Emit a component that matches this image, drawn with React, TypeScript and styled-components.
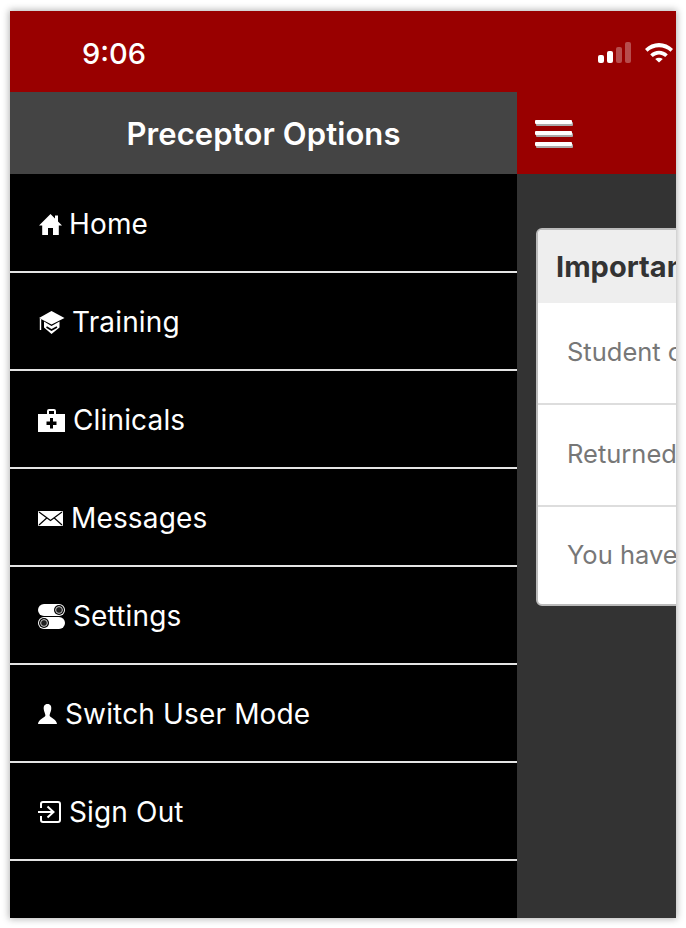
import type { ReactNode } from "react";
import styled, { createGlobalStyle } from "styled-components";

const GlobalStyle = createGlobalStyle`
	html, body {
		margin: 0;
		padding: 0;
		background: #fff;
		font-family: Inter, "Liberation Sans", Arial, sans-serif;
	}
`

const Page = styled.div`
	width: 686px;
	height: 928px;
	padding: 11px 10px 10px;
	box-sizing: border-box;
`

const Phone = styled.div`
	width: 666px;
	height: 907px;
	display: flex;
	flex-direction: column;
	overflow: hidden;
	box-shadow: 0 0 7px 1px rgba(0, 0, 0, 0.3);
`

const StatusBar = styled.div`
	height: 81px;
	flex: none;
	background: #990000;
	color: #fff;
	display: flex;
	align-items: flex-start;
	justify-content: space-between;
	padding: 30px 2px 0 72px;
	box-sizing: border-box;
`

const Clock = styled.span`
	font-size: 29px;
	font-weight: 500;
	line-height: 26px;
`

const StatusIcons = styled.div`
	display: flex;
	align-items: flex-end;
	gap: 13px;
	height: 22px;
`

const SignalBars = styled.div`
	display: flex;
	align-items: flex-end;
	gap: 3px;
`

const SignalBar = styled.i<{ $height: number; $on?: boolean }>`
	display: block;
	width: 6px;
	height: ${p => p.$height}px;
	border-radius: 2px;
	background: ${p => (p.$on ? "#fff" : "rgba(255, 255, 255, 0.3)")};
`

const Body = styled.div`
	flex: 1;
	display: flex;
	min-height: 0;
`

const Drawer = styled.nav`
	width: 507px;
	flex: none;
	background: #000;
	display: flex;
	flex-direction: column;
`

const DrawerTitle = styled.h1`
	margin: 0;
	height: 82px;
	flex: none;
	background: #444;
	color: #fff;
	display: flex;
	align-items: center;
	justify-content: center;
	font-size: 31px;
	font-weight: 600;
	letter-spacing: 0.1px;
`

const Menu = styled.div`
	padding-top: 1px;
	display: flex;
	flex-direction: column;
`

const MenuRow = styled.a`
	height: 98px;
	box-sizing: border-box;
	display: flex;
	align-items: center;
	gap: 7px;
	padding: 2px 0 0 28px;
	border-bottom: 2px solid #e4e4e4;
	color: #fff;
	font-size: 28px;
	font-weight: 400;
	letter-spacing: 0.15px;
`

const MainColumn = styled.div`
	flex: 1;
	min-width: 0;
	display: flex;
	flex-direction: column;
	background: #333;
	overflow: hidden;
`

const Toolbar = styled.div`
	height: 82px;
	flex: none;
	background: #990000;
	display: flex;
	align-items: center;
	padding-left: 18px;
`

const Burger = styled.div`
	display: flex;
	flex-direction: column;
	gap: 7px;
	margin-top: -1px;
`

const BurgerBar = styled.i`
	display: block;
	width: 37px;
	height: 4px;
	border-radius: 1px;
	background: #fff;
	box-shadow: 1px 2px 0 #aaa;
`

const Card = styled.section`
	width: 300px;
	flex: none;
	margin: 54px 0 0 19px;
	background: #fff;
	border: 2px solid #bbb;
	border-radius: 6px;
	box-sizing: border-box;
	overflow: hidden;
`

const CardHeader = styled.h2`
	margin: 0;
	height: 73px;
	background: #eee;
	color: #333;
	display: flex;
	align-items: center;
	padding-left: 18px;
	font-size: 29px;
	font-weight: 700;
	white-space: nowrap;
`

const CardRow = styled.div<{ $last?: boolean }>`
	height: ${p => (p.$last ? 97 : 102)}px;
	box-sizing: border-box;
	display: flex;
	align-items: center;
	padding: 0 0 ${p => (p.$last ? 2 : 4)}px 29px;
	border-bottom: ${p => (p.$last ? "none" : "2px solid #ddd")};
	color: #777;
	font-size: 25.5px;
	white-space: nowrap;
`

function Icon({ width, height, children }: { width: number; height: number; children: ReactNode }) {
	return (
		<svg width={width} height={height} viewBox={`0 0 ${width} ${height}`} fill="#fff" style={{ flex: "none" }}>
			{children}
		</svg>
	)
}

const menu: { label: string; width: number; height: number; icon: ReactNode }[] = [
	{
		label: "Home",
		width: 24,
		height: 21,
		icon: <path d="M12.5 0 L17 4.4 V1.5 H20 V7.4 L24 11.5 H20.8 V21 H15 V14 H10 V21 H4.2 V11.5 H1 Z" />,
	},
	{
		label: "Training",
		width: 27,
		height: 23,
		icon: (
			<>
				<path d="M13.5 0 L26.5 7 L13.5 13.5 L1 7 Z" />
				<path d="M6 10.5 L13.5 15 L21.5 10.5 V16.5 L13.5 23 L6 16.5 Z" />
				<path d="M8.5 16 L13.5 19 L19 16" fill="none" stroke="#000" strokeWidth="1.6" />
				<path d="M2.5 8 V19" stroke="#fff" strokeWidth="1.4" />
			</>
		),
	},
	{
		label: "Clinicals",
		width: 28,
		height: 23,
		icon: (
			<path fillRule="evenodd" d="M9 5 V2 Q9 0 11 0 H16 Q18 0 18 2 V5 H27 V23 H0 V5 Z M11 5 H16 V2 H11 Z M12 9 V12.5 H8.5 V16 H12 V19.5 H15 V16 H18.5 V12.5 H15 V9 Z" />
		),
	},
	{
		label: "Messages",
		width: 26,
		height: 15,
		icon: (
			<>
				<rect width="25" height="15" rx="1" />
				<path d="M1 1 L12.5 9.5 L24 1 M1 14 L9 6.8 M24 14 L16 6.8" fill="none" stroke="#000" strokeWidth="1.2" />
			</>
		),
	},
	{
		label: "Settings",
		width: 28,
		height: 25,
		icon: (
			<>
				<rect width="27" height="12" rx="6" />
				<rect y="13" width="27" height="12" rx="6" />
				<circle cx="21" cy="6" r="5" fill="#000" />
				<circle cx="21" cy="6" r="3.4" fill="#222" stroke="#ccc" strokeWidth="1" />
				<circle cx="6" cy="19" r="5" fill="#000" />
				<circle cx="6" cy="19" r="3.4" fill="#222" stroke="#ccc" strokeWidth="1" />
			</>
		),
	},
	{
		label: "Switch User Mode",
		width: 20,
		height: 20,
		icon: <path d="M9.5 0 C12.6 0 13.6 2.4 13.2 5.4 C12.9 8 11.6 9.6 11.6 11.4 C11.6 13.4 19 15 19 20 H0 C0 15 7.4 13.4 7.4 11.4 C7.4 9.6 6.1 8 5.8 5.4 C5.4 2.4 6.4 0 9.5 0 Z" />,
	},
	{
		label: "Sign Out",
		width: 24,
		height: 22,
		icon: (
			<path
				d="M3 7 V3 Q3 1 5 1 H20 Q22 1 22 3 V19 Q22 21 20 21 H5 Q3 21 3 19 V15 M0 11 H15 M9.5 5.5 L15.5 11 L9.5 16.5"
				fill="none"
				stroke="#fff"
				strokeWidth="2"
			/>
		),
	},
]

const wifiArcs = "M1 9 C8.5 1 21.5 1 29 9 L26.5 11.7 C20.5 5.6 9.5 5.6 3.5 11.7 Z M6.2 14.4 C11 9.6 19 9.6 23.8 14.4 L21.2 17 C17.5 13.6 12.5 13.6 8.8 17 Z M11.2 19 C13.5 17.2 16.5 17.2 18.8 19 L15 22.5 Z"

export default function App() {
	return (
		<Page>
			<GlobalStyle />
			<Phone>
				<StatusBar>
					<Clock>9:06</Clock>
					<StatusIcons>
						<SignalBars>
							<SignalBar $height={8} $on />
							<SignalBar $height={12} $on />
							<SignalBar $height={16} />
							<SignalBar $height={21} />
						</SignalBars>
						<svg width="30" height="23" viewBox="0 0 30 23" fill="#fff">
							<path d={wifiArcs} />
						</svg>
					</StatusIcons>
				</StatusBar>
				<Body>
					<Drawer>
						<DrawerTitle>Preceptor Options</DrawerTitle>
						<Menu>
							{menu.map(item => (
								<MenuRow key={item.label}>
									<Icon width={item.width} height={item.height}>{item.icon}</Icon>
									{item.label}
								</MenuRow>
							))}
						</Menu>
					</Drawer>
					<MainColumn>
						<Toolbar>
							<Burger>
								<BurgerBar />
								<BurgerBar />
								<BurgerBar />
							</Burger>
						</Toolbar>
						<Card>
							<CardHeader>Important Notices</CardHeader>
							<CardRow>Student of the year</CardRow>
							<CardRow>Returned items</CardRow>
							<CardRow $last>You have messages</CardRow>
						</Card>
					</MainColumn>
				</Body>
			</Phone>
		</Page>
	)
}
